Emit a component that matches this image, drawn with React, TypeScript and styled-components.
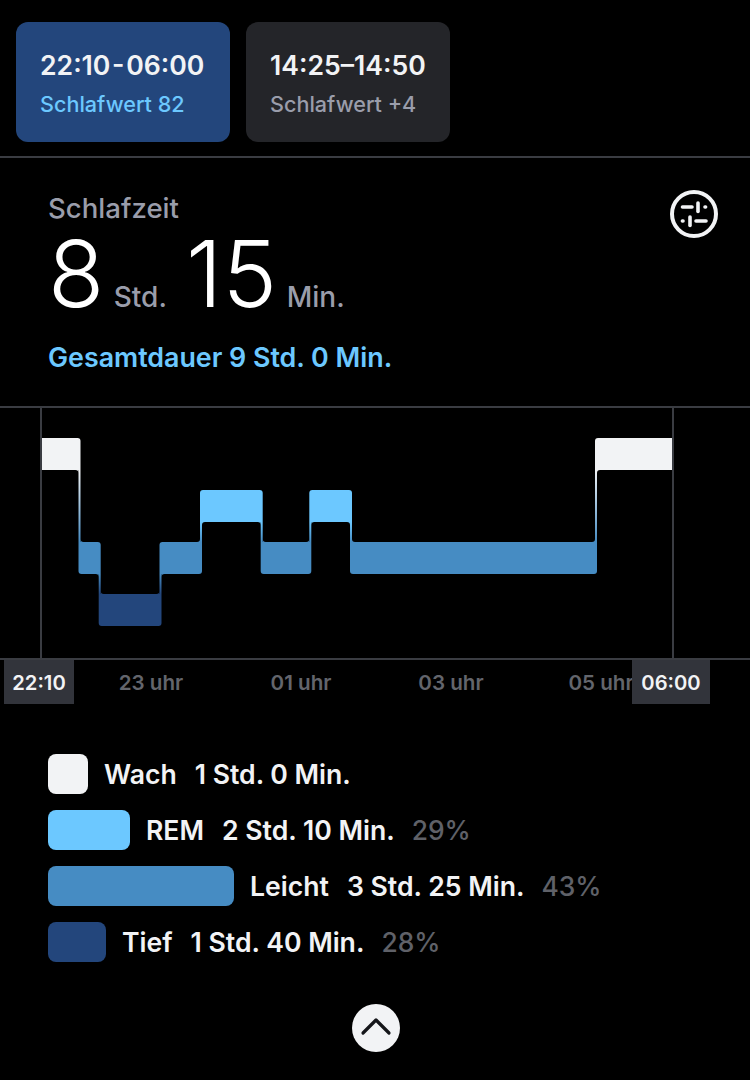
import React from "react";
import styled, { createGlobalStyle } from "styled-components";

const GlobalStyle = createGlobalStyle`
  html, body {
    margin: 0;
    background: #000;
  }

  body {
    font-family: "Inter", "Liberation Sans", sans-serif;
    color: #f2f3f5;
  }
`;

const colors = {
  wach: "#f2f3f5",
  rem: "#6cc8ff",
  leicht: "#468cc3",
  tief: "#23467c",
};

type Stage = keyof typeof colors;

const Page = styled.div`
  width: 750px;
  height: 1080px;
  overflow: hidden;
  background: #000;
`;

const TabBar = styled.div`
  display: flex;
  gap: 16px;
  padding: 22px 16px 14px;
  border-bottom: 2px solid #3a3c42;
`;

const Tab = styled.div<{ $active?: boolean }>`
  width: ${(p) => (p.$active ? 214 : 204)}px;
  height: 120px;
  box-sizing: border-box;
  padding: 26px 0 0 24px;
  border-radius: 12px;
  background: ${(p) => (p.$active ? colors.tief : "#242529")};
`;

const TabTitle = styled.div<{ $tight?: boolean }>`
  font-size: 26.6px;
  line-height: 34px;
  font-weight: 600;
  word-spacing: ${(p) => (p.$tight ? "-5px" : "0")};
  white-space: nowrap;
  color: ${colors.wach};
`;

const TabSub = styled.div<{ $active?: boolean }>`
  margin-top: 8px;
  font-size: 21.6px;
  line-height: 28px;
  font-weight: 500;
  color: ${(p) => (p.$active ? colors.rem : "#9a9dab")};
`;

const Summary = styled.section`
  display: flex;
  justify-content: space-between;
  height: 250px;
  box-sizing: border-box;
  padding: 32px 32px 0 48px;
  border-bottom: 2px solid #3a3c42;
`;

const Label = styled.div`
  font-size: 27.6px;
  line-height: 36px;
  font-weight: 500;
  color: #9a9dab;
`;

const Duration = styled.div`
  display: flex;
  align-items: baseline;
  height: 88px;
  margin-top: 4px;
`;

const BigNumber = styled.span`
  font-size: 92px;
  line-height: 88px;
  font-weight: 300;
  letter-spacing: 0.5px;
  color: #fff;
`;

const Unit = styled.span`
  margin: 0 19px 0 9px;
  font-size: 28px;
  font-weight: 500;
  color: #9a9dab;
`;

const Total = styled.div`
  margin-top: 21px;
  font-size: 26.8px;
  line-height: 36px;
  font-weight: 600;
  color: ${colors.rem};
`;

const ChartFrame = styled.div`
  height: 250px;
  border-bottom: 2px solid #3a3c42;
`;

const ChartSvg = styled.svg`
  display: block;
`;

const Axis = styled.div`
  display: flex;
  align-items: flex-start;
  height: 44px;
  padding-left: 4px;
`;

const TimeBox = styled.div<{ $end?: boolean }>`
  position: relative;
  flex: none;
  width: ${(p) => (p.$end ? 78 : 70)}px;
  height: 44px;
  margin-left: ${(p) => (p.$end ? -44 : 0)}px;
  margin-right: ${(p) => (p.$end ? 0 : 2)}px;
  background: #32343b;
  font-size: 20.2px;
  font-weight: 600;
  line-height: 46px;
  text-align: center;
  color: ${colors.wach};
`;

const Tick = styled.div`
  flex: none;
  width: 150px;
  font-size: 20.6px;
  font-weight: 600;
  line-height: 46px;
  text-align: center;
  white-space: nowrap;
  color: #63656c;
`;

const Legend = styled.div`
  display: flex;
  flex-direction: column;
  gap: 16px;
  margin-top: 50px;
  padding-left: 48px;
`;

const LegendRow = styled.div`
  display: flex;
  align-items: center;
  height: 40px;
  font-size: 26.6px;
  font-weight: 600;
  color: ${colors.wach};
`;

const Swatch = styled.div<{ $stage: Stage; $width: number }>`
  width: ${(p) => p.$width}px;
  height: 40px;
  margin-right: 16px;
  border-radius: 8px;
  background: ${(p) => colors[p.$stage]};
`;

const StageName = styled.span`
  margin-right: 18px;
`;

const Percent = styled.span`
  margin-left: 17px;
  font-size: 26.4px;
  font-weight: 500;
  color: #5f6168;
`;

const Collapse = styled.button`
  display: flex;
  align-items: center;
  justify-content: center;
  width: 48px;
  height: 48px;
  margin: 42px 0 0 352px;
  padding: 0;
  border: 0;
  border-radius: 50%;
  background: ${colors.wach};
`;

const top = 408;

const levels: Record<Stage, number> = {
  wach: 438 - top,
  rem: 490 - top,
  leicht: 542 - top,
  tief: 594 - top,
};

const segments: { stage: Stage; x1: number; x2: number }[] = [
  { stage: "wach", x1: 42, x2: 80.5 },
  { stage: "leicht", x1: 78.5, x2: 100.7 },
  { stage: "tief", x1: 98.7, x2: 161.5 },
  { stage: "leicht", x1: 159.5, x2: 202 },
  { stage: "rem", x1: 200, x2: 262.7 },
  { stage: "leicht", x1: 260.7, x2: 311.3 },
  { stage: "rem", x1: 309.3, x2: 352 },
  { stage: "leicht", x1: 350, x2: 597 },
  { stage: "wach", x1: 595, x2: 672 },
];

const BAR = 32;
const R = 3;

// bar with only its outer corners rounded, the inner ones run into the connector
const barPath = (x1: number, x2: number, y: number, tl: number, tr: number, br: number, bl: number) => {
  const b = y + BAR;
  return [
    `M${x1 + tl} ${y}`,
    `H${x2 - tr}`,
    `Q${x2} ${y} ${x2} ${y + tr}`,
    `V${b - br}`,
    `Q${x2} ${b} ${x2 - br} ${b}`,
    `H${x1 + bl}`,
    `Q${x1} ${b} ${x1} ${b - bl}`,
    `V${y + tl}`,
    `Q${x1} ${y} ${x1 + tl} ${y}`,
    "Z",
  ].join(" ");
};

const SleepChart = () => (
  <ChartSvg width="750" height="250" viewBox="0 0 750 250">
    <defs>
      {segments.slice(1).map((seg, i) => {
        const prev = segments[i];
        return (
          <linearGradient
            key={i}
            id={`link${i}`}
            gradientUnits="userSpaceOnUse"
            x1="0"
            x2="0"
            y1={levels[prev.stage] + (levels[prev.stage] < levels[seg.stage] ? BAR : 0)}
            y2={levels[seg.stage] + (levels[seg.stage] < levels[prev.stage] ? BAR : 0)}
          >
            <stop offset="0" stopColor={colors[prev.stage]} />
            <stop offset="1" stopColor={colors[seg.stage]} />
          </linearGradient>
        );
      })}
    </defs>
    <rect x="40" y="0" width="2" height="250" fill="#3a3c42" />
    <rect x="672" y="0" width="2" height="250" fill="#3a3c42" />
    {segments.slice(1).map((seg, i) => {
      const prev = segments[i];
      const down = levels[prev.stage] < levels[seg.stage];
      const upper = down ? prev : seg;
      const lower = down ? seg : prev;
      const yTop = levels[upper.stage] + BAR;
      const yBottom = levels[lower.stage];
      const x1 = seg.x1;
      const x2 = prev.x2;
      // which side of the connector the upper bar lies on
      const upperSide = down ? -1 : 1;
      const upperX = down ? x1 : x2;
      const lowerX = down ? x2 : x1;
      return (
        <g key={i}>
          <rect x={x1} y={yTop} width={x2 - x1} height={yBottom - yTop} fill={`url(#link${i})`} />
          <path
            d={`M${upperX} ${yTop} H${upperX + upperSide * R} Q${upperX} ${yTop} ${upperX} ${yTop + R} Z`}
            fill={colors[upper.stage]}
          />
          <path
            d={`M${lowerX} ${yBottom} H${lowerX - upperSide * R} Q${lowerX} ${yBottom} ${lowerX} ${yBottom - R} Z`}
            fill={colors[lower.stage]}
          />
        </g>
      );
    })}
    {segments.map((seg, i) => {
      const y = levels[seg.stage];
      const prev = segments[i - 1];
      const next = segments[i + 1];
      const leftUp = prev && levels[prev.stage] < y;
      const rightUp = next && levels[next.stage] < y;
      const tl = prev && !leftUp ? R : 0;
      const bl = prev && leftUp ? R : 0;
      const tr = next && !rightUp ? R : 0;
      const br = next && rightUp ? R : 0;
      return <path key={i} d={barPath(seg.x1, seg.x2, y, tl, tr, br, bl)} fill={colors[seg.stage]} />;
    })}
  </ChartSvg>
);

const SettingsIcon = () => (
  <svg width="48" height="48" viewBox="0 0 48 48" fill="none" stroke="#f2f3f5" strokeLinecap="round">
    <circle cx="24" cy="24" r="22" strokeWidth="4" />
    <g strokeWidth="3.6">
      <path d="M12.5 17H22" />
      <path d="M28 13V21.5" />
      <path d="M35 17H35.6" />
      <path d="M12.4 31H13" />
      <path d="M20 27V35.5" />
      <path d="M26 31H36" />
    </g>
  </svg>
);

const legend: { stage: Stage; width: number; name: string; time: string; percent?: string }[] = [
  { stage: "wach", width: 40, name: "Wach", time: "1 Std. 0 Min." },
  { stage: "rem", width: 82, name: "REM", time: "2 Std. 10 Min.", percent: "29%" },
  { stage: "leicht", width: 186, name: "Leicht", time: "3 Std. 25 Min.", percent: "43%" },
  { stage: "tief", width: 58, name: "Tief", time: "1 Std. 40 Min.", percent: "28%" },
];

export default function App() {
  return (
    <Page>
      <GlobalStyle />
      <TabBar>
        <Tab $active>
          <TabTitle $tight>22:10 - 06:00</TabTitle>
          <TabSub $active>Schlafwert 82</TabSub>
        </Tab>
        <Tab>
          <TabTitle>14:25–14:50</TabTitle>
          <TabSub>Schlafwert +4</TabSub>
        </Tab>
      </TabBar>

      <Summary>
        <div>
          <Label>Schlafzeit</Label>
          <Duration>
            <BigNumber>8</BigNumber>
            <Unit>Std.</Unit>
            <BigNumber>15</BigNumber>
            <Unit>Min.</Unit>
          </Duration>
          <Total>Gesamtdauer 9 Std. 0 Min.</Total>
        </div>
        <SettingsIcon />
      </Summary>

      <ChartFrame>
        <SleepChart />
      </ChartFrame>

      <Axis>
        <TimeBox>22:10</TimeBox>
        <Tick>23 uhr</Tick>
        <Tick>01 uhr</Tick>
        <Tick>03 uhr</Tick>
        <Tick>05 uhr</Tick>
        <TimeBox $end>06:00</TimeBox>
      </Axis>

      <Legend>
        {legend.map((row) => (
          <LegendRow key={row.stage}>
            <Swatch $stage={row.stage} $width={row.width} />
            <StageName>{row.name}</StageName>
            <span>{row.time}</span>
            {row.percent && <Percent>{row.percent}</Percent>}
          </LegendRow>
        ))}
      </Legend>

      <Collapse aria-label="Einklappen">
        <svg width="48" height="48" viewBox="0 0 48 48" fill="none" stroke="#15161a" strokeWidth="3.2" strokeLinecap="round" strokeLinejoin="round">
          <path d="M11 29L24 16L37 29" />
        </svg>
      </Collapse>
    </Page>
  );
}
